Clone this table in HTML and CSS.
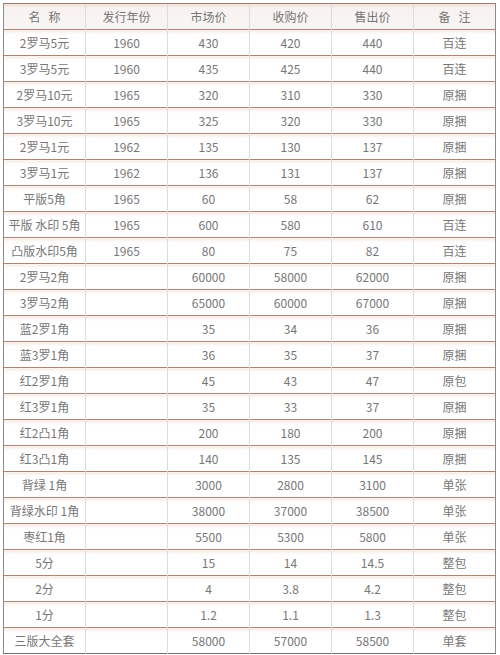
FILE: index.html
```html
<!DOCTYPE html>
<html lang="zh">
<head>
<meta charset="utf-8">
<link rel="stylesheet" href="styles.css">
</head>
<body>
<table class="price">
<thead>
<tr><th>名&nbsp;&nbsp;&nbsp;称</th><th>发行年份</th><th>市场价</th><th>收购价</th><th>售出价</th><th>备&nbsp;&nbsp;&nbsp;注</th></tr>
</thead>
<tbody>
<tr><td>2罗马5元</td><td>1960</td><td>430</td><td>420</td><td>440</td><td>百连</td></tr>
<tr><td>3罗马5元</td><td>1960</td><td>435</td><td>425</td><td>440</td><td>百连</td></tr>
<tr><td>2罗马10元</td><td>1965</td><td>320</td><td>310</td><td>330</td><td>原捆</td></tr>
<tr><td>3罗马10元</td><td>1965</td><td>325</td><td>320</td><td>330</td><td>原捆</td></tr>
<tr><td>2罗马1元</td><td>1962</td><td>135</td><td>130</td><td>137</td><td>原捆</td></tr>
<tr><td>3罗马1元</td><td>1962</td><td>136</td><td>131</td><td>137</td><td>原捆</td></tr>
<tr><td>平版5角</td><td>1965</td><td>60</td><td>58</td><td>62</td><td>原捆</td></tr>
<tr><td>平版 水印 5角</td><td>1965</td><td>600</td><td>580</td><td>610</td><td>百连</td></tr>
<tr><td>凸版水印5角</td><td>1965</td><td>80</td><td>75</td><td>82</td><td>百连</td></tr>
<tr><td>2罗马2角</td><td></td><td>60000</td><td>58000</td><td>62000</td><td>原捆</td></tr>
<tr><td>3罗马2角</td><td></td><td>65000</td><td>60000</td><td>67000</td><td>原捆</td></tr>
<tr><td>蓝2罗1角</td><td></td><td>35</td><td>34</td><td>36</td><td>原捆</td></tr>
<tr><td>蓝3罗1角</td><td></td><td>36</td><td>35</td><td>37</td><td>原捆</td></tr>
<tr><td>红2罗1角</td><td></td><td>45</td><td>43</td><td>47</td><td>原包</td></tr>
<tr><td>红3罗1角</td><td></td><td>35</td><td>33</td><td>37</td><td>原捆</td></tr>
<tr><td>红2凸1角</td><td></td><td>200</td><td>180</td><td>200</td><td>原捆</td></tr>
<tr><td>红3凸1角</td><td></td><td>140</td><td>135</td><td>145</td><td>原捆</td></tr>
<tr><td>背绿 1角</td><td></td><td>3000</td><td>2800</td><td>3100</td><td>单张</td></tr>
<tr><td>背绿水印 1角</td><td></td><td>38000</td><td>37000</td><td>38500</td><td>单张</td></tr>
<tr><td>枣红1角</td><td></td><td>5500</td><td>5300</td><td>5800</td><td>单张</td></tr>
<tr><td>5分</td><td></td><td>15</td><td>14</td><td>14.5</td><td>整包</td></tr>
<tr><td>2分</td><td></td><td>4</td><td>3.8</td><td>4.2</td><td>整包</td></tr>
<tr><td>1分</td><td></td><td>1.2</td><td>1.1</td><td>1.3</td><td>整包</td></tr>
<tr><td>三版大全套</td><td></td><td>58000</td><td>57000</td><td>58500</td><td>单套</td></tr>
</tbody>
</table>
</body>
</html>
```

FILE: styles.css
```css
html, body {
  margin: 0;
  padding: 0;
  background: #fff;
}
.price {
  margin: 3px 0 0 3px;
  width: 493px;
  border-collapse: collapse;
  table-layout: fixed;
  font-family: "Noto Sans CJK SC", "Microsoft YaHei", sans-serif;
  font-size: 12px;
  color: #777;
  border-left: 1px solid #8c8c8c;
  border-right: 1px solid #8c8c8c;
  border-bottom: 1px solid #6e6e6e;
}
.price th,
.price td {
  height: 26px;
  box-sizing: border-box;
  padding: 0;
  text-align: center;
  font-weight: normal;
  border-left: 1px solid #dcdcdc;
  border-top: 1px solid #a98676;
  background: linear-gradient(to bottom, #f3e2db 0, #fdf8f6 2px, #fff 5px, #fff 100%);
  line-height: 24px;
}
.price th {
  border-top: 1px solid #9b7868;
  background: linear-gradient(to bottom, #efdad1 0, #f8f3f1 3px, #f8f4f3 100%);
}
.price tr > :first-child {
  border-left: 0;
}
```
